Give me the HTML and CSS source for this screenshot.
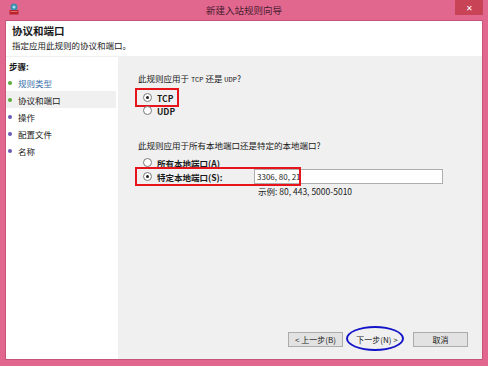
FILE: index.html
```html
<!DOCTYPE html>
<html lang="zh-CN">
<head>
    <meta charset="UTF-8">
    <title>新建入站规则向导</title>
    <link rel="stylesheet" href="styles.css">
</head>
<body>
    <div class="window">
        <!-- Title bar -->
        <div class="titlebar">
            <svg class="app-icon" width="12" height="12" viewBox="0 0 12 12">
                <circle cx="6" cy="4" r="3.5" fill="#3a8fb0"/>
                <circle cx="6" cy="4" r="1.6" fill="#a7dce8"/>
                <rect x="1.5" y="7" width="9" height="4.5" fill="#b8242c"/>
                <rect x="2.5" y="8" width="7" height="1" fill="#e46a6a"/>
            </svg>
            <span class="title">新建入站规则向导</span>
            <div class="close">&#x2715;</div>
        </div>

        <div class="client">
            <!-- Page header -->
            <div class="header">
                <div class="header-title">协议和端口</div>
                <div class="header-sub">指定应用此规则的协议和端口。</div>
            </div>

            <div class="main">
                <!-- Steps list -->
                <div class="steps">
                    <div class="steps-title">步骤:</div>
                    <div class="step done"><span class="dot green"></span><span class="link">规则类型</span></div>
                    <div class="step current"><span class="dot green"></span>协议和端口</div>
                    <div class="step"><span class="dot purple"></span>操作</div>
                    <div class="step"><span class="dot purple"></span>配置文件</div>
                    <div class="step"><span class="dot purple"></span>名称</div>
                </div>

                <!-- Right panel -->
                <div class="panel">
                    <div class="question">此规则应用于 <span class="mono">TCP</span> 还是 <span class="mono">UDP</span>?</div>
                    <div class="options">
                        <div class="option bold marked"><span class="radio checked"></span>TCP</div>
                        <div class="option bold"><span class="radio"></span>UDP</div>
                    </div>

                    <div class="question q2">此规则应用于所有本地端口还是特定的本地端口?</div>
                    <div class="options">
                        <div class="option bold"><span class="radio"></span>所有本地端口(A)</div>
                        <div class="port-row">
                            <div class="option bold wide"><span class="radio checked"></span>特定本地端口(S):</div>
                            <div class="port-input">3306, 80, 21</div>
                            <div class="highlight"></div>
                        </div>
                        <div class="example">示例: 80, 443, 5000-5010</div>
                    </div>

                    <div class="buttons">
                        <button class="btn">&lt; 上一步(B)</button>
                        <div class="next-wrap">
                            <button class="btn next">下一步(N) &gt;</button>
                            <div class="circle"></div>
                        </div>
                        <button class="btn cancel">取消</button>
                    </div>
                </div>
            </div>
        </div>
    </div>
</body>
</html>
```

FILE: styles.css
```css
/* Page */
body {
    margin: 0;
    font-family: "Noto Sans CJK SC", "Noto Sans", sans-serif;
    font-size: 8.5px;
    color: #1a1a1a;
}

/* Window frame */
.window {
    width: 488px;
    height: 366px;
    box-sizing: border-box;
    background: #e2678f;
    padding: 0 5px 6px 5px;
    display: flex;
    flex-direction: column;
}

.titlebar {
    height: 20px;
    display: flex;
    align-items: center;
    justify-content: center;
    position: relative;
}

.app-icon {
    position: absolute;
    left: 3px;
    top: 3px;
}

.title {
    font-size: 9.5px;
    color: #4a2030;
}

.close {
    position: absolute;
    right: 0;
    top: 0;
    width: 28px;
    height: 15px;
    background: #c94356;
    color: #fff;
    font-size: 8px;
    display: flex;
    align-items: center;
    justify-content: center;
}

/* Client area */
.client {
    flex: 1;
    background: #fff;
    display: flex;
    flex-direction: column;
    border: 1px solid #c65578;
}

.header {
    height: 35px;
    padding: 3px 0 0 6px;
    box-sizing: border-box;
}

.header-title {
    font-size: 10.5px;
    font-weight: bold;
    line-height: 14px;
}

.header-sub {
    line-height: 14px;
}

.main {
    flex: 1;
    display: flex;
}

/* Steps list */
.steps {
    width: 112px;
    background: #fff;
    border-top: 1px solid #eef0f2;
    padding-top: 1px;
}

.steps-title {
    font-weight: bold;
    padding-left: 3px;
    height: 16px;
    line-height: 16px;
}

.step {
    height: 17px;
    display: flex;
    align-items: center;
    padding-left: 2px;
}

.step.current {
    background: #f0f0f0;
    margin-right: 2px;
}

.link {
    color: #3a6fa8;
}

.dot {
    width: 4px;
    height: 4px;
    border-radius: 50%;
    margin-right: 6px;
}

.dot.green { background: #5cae3c; }
.dot.purple { background: #6a5ab4; }

/* Right panel */
.panel {
    flex: 1;
    background: #f0f0f0;
    padding: 16px 0 0 20px;
    display: flex;
    flex-direction: column;
}

.question {
    line-height: 12px;
}

.mono {
    font-family: "Liberation Mono", monospace;
    font-size: 7px;
}

.q2 {
    margin-top: 22px;
}

.options {
    margin-top: 5px;
}

.option {
    display: flex;
    align-items: center;
    height: 13px;
    padding-left: 5px;
    width: fit-content;
    box-sizing: border-box;
}

.bold {
    font-weight: bold;
}

.marked {
    outline: 2px solid #e8141c;
    outline-offset: 1px;
    padding-right: 3px;
}

.radio {
    width: 7px;
    height: 7px;
    border: 1px solid #7a7a7a;
    border-radius: 50%;
    background: #fff;
    margin-right: 5px;
    position: relative;
}

.radio.checked::after {
    content: "";
    position: absolute;
    left: 2px;
    top: 2px;
    width: 3px;
    height: 3px;
    border-radius: 50%;
    background: #222;
}

.port-row {
    display: flex;
    align-items: center;
    position: relative;
}

.wide {
    width: 116px;
    height: 15px;
}

.port-input {
    width: 189px;
    height: 15px;
    box-sizing: border-box;
    border: 1px solid #adadad;
    background: #fff;
    font-size: 8px;
    padding-left: 2px;
    line-height: 13px;
}

/* red mark drawn over the label and the start of the field */
.highlight {
    position: absolute;
    left: -3px;
    top: -2px;
    width: 166px;
    height: 19px;
    box-sizing: border-box;
    border: 2px solid #e8141c;
}

.example {
    margin: 1px 0 0 120px;
}

/* Bottom buttons */
.buttons {
    margin-top: auto;
    margin-bottom: 12px;
    display: flex;
    justify-content: flex-end;
    padding-right: 14px;
}

.btn {
    width: 55px;
    height: 15px;
    font-family: inherit;
    font-size: 8px;
    background: #e2e2e2;
    border: 1px solid #acacac;
    padding: 0;
    color: #1a1a1a;
}

.next-wrap {
    position: relative;
    margin: 0 10px 0 8px;
}

.next {
    background: transparent;
    border-color: transparent;
    width: 52px;
}

.circle {
    position: absolute;
    left: -5px;
    top: -6px;
    width: 58px;
    height: 25px;
    box-sizing: border-box;
    border: 2px solid #1414c8;
    border-radius: 50%;
}
```
